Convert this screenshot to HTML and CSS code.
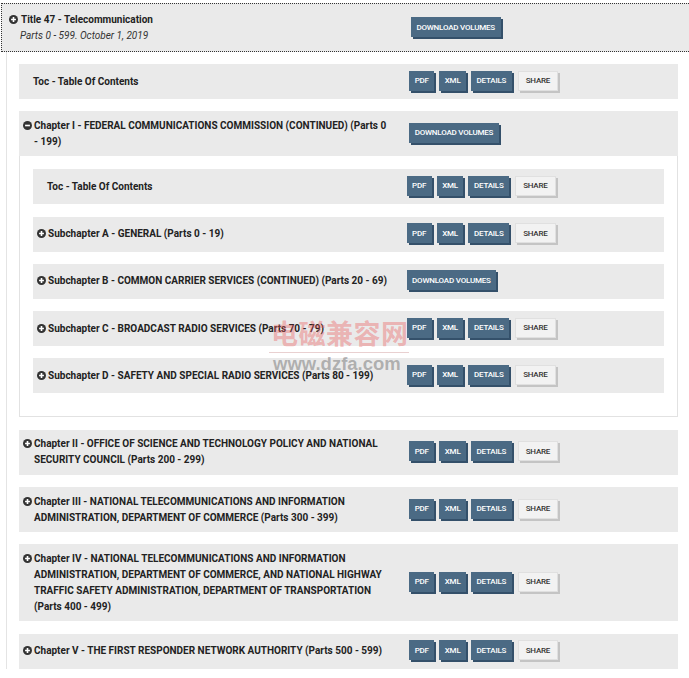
FILE: index.html
```html
<!DOCTYPE html>
<html lang="en">
<head>
<meta charset="utf-8">
<title>Title 47 - Telecommunication</title>
<link rel="stylesheet" href="styles.css">
</head>
<body>
<div class="page">
  <section class="title">
    <div class="title-head">
      <div class="title-text">
        <div class="title-name"><svg class="ico" viewBox="0 0 10 10"><circle cx="5" cy="5" r="5"/><path d="M5 2.3v5.4M2.3 5h5.4"/></svg>Title 47 - Telecommunication</div>
        <div class="title-sub">Parts 0 - 599. October 1, 2019</div>
      </div>
      <div class="actions"><a class="btn">Download Volumes</a></div>
    </div>

    <div class="title-body">
      <div class="row">
        <div class="label plain">Toc - Table Of Contents</div>
        <div class="actions"><a class="btn">PDF</a><a class="btn">XML</a><a class="btn">Details</a><a class="btn light">Share</a></div>
      </div>

      <div class="chapter">
        <div class="row">
          <div class="label"><svg class="ico" viewBox="0 0 10 10"><circle cx="5" cy="5" r="5"/><path d="M2.3 5h5.4"/></svg>Chapter I - FEDERAL COMMUNICATIONS COMMISSION (CONTINUED) (Parts 0 - 199)</div>
          <div class="actions"><a class="btn">Download Volumes</a></div>
        </div>
        <div class="chapter-body">
          <div class="row">
            <div class="label plain">Toc - Table Of Contents</div>
            <div class="actions"><a class="btn">PDF</a><a class="btn">XML</a><a class="btn">Details</a><a class="btn light">Share</a></div>
          </div>
          <div class="row">
            <div class="label"><svg class="ico" viewBox="0 0 10 10"><circle cx="5" cy="5" r="5"/><path d="M5 2.3v5.4M2.3 5h5.4"/></svg>Subchapter A - GENERAL (Parts 0 - 19)</div>
            <div class="actions"><a class="btn">PDF</a><a class="btn">XML</a><a class="btn">Details</a><a class="btn light">Share</a></div>
          </div>
          <div class="row">
            <div class="label"><svg class="ico" viewBox="0 0 10 10"><circle cx="5" cy="5" r="5"/><path d="M5 2.3v5.4M2.3 5h5.4"/></svg>Subchapter B - COMMON CARRIER SERVICES (CONTINUED) (Parts 20 - 69)</div>
            <div class="actions"><a class="btn">Download Volumes</a></div>
          </div>
          <div class="row">
            <div class="label"><svg class="ico" viewBox="0 0 10 10"><circle cx="5" cy="5" r="5"/><path d="M5 2.3v5.4M2.3 5h5.4"/></svg>Subchapter C - BROADCAST RADIO SERVICES (Parts 70 - 79)</div>
            <div class="actions"><a class="btn">PDF</a><a class="btn">XML</a><a class="btn">Details</a><a class="btn light">Share</a></div>
          </div>
          <div class="row">
            <div class="label"><svg class="ico" viewBox="0 0 10 10"><circle cx="5" cy="5" r="5"/><path d="M5 2.3v5.4M2.3 5h5.4"/></svg>Subchapter D - SAFETY AND SPECIAL RADIO SERVICES (Parts 80 - 199)</div>
            <div class="actions"><a class="btn">PDF</a><a class="btn">XML</a><a class="btn">Details</a><a class="btn light">Share</a></div>
          </div>
        </div>
      </div>

      <div class="row">
        <div class="label"><svg class="ico" viewBox="0 0 10 10"><circle cx="5" cy="5" r="5"/><path d="M5 2.3v5.4M2.3 5h5.4"/></svg>Chapter II - OFFICE OF SCIENCE AND TECHNOLOGY POLICY AND NATIONAL SECURITY COUNCIL (Parts 200 - 299)</div>
        <div class="actions"><a class="btn">PDF</a><a class="btn">XML</a><a class="btn">Details</a><a class="btn light">Share</a></div>
      </div>
      <div class="row">
        <div class="label"><svg class="ico" viewBox="0 0 10 10"><circle cx="5" cy="5" r="5"/><path d="M5 2.3v5.4M2.3 5h5.4"/></svg>Chapter III - NATIONAL TELECOMMUNICATIONS AND INFORMATION ADMINISTRATION, DEPARTMENT OF COMMERCE (Parts 300 - 399)</div>
        <div class="actions"><a class="btn">PDF</a><a class="btn">XML</a><a class="btn">Details</a><a class="btn light">Share</a></div>
      </div>
      <div class="row">
        <div class="label"><svg class="ico" viewBox="0 0 10 10"><circle cx="5" cy="5" r="5"/><path d="M5 2.3v5.4M2.3 5h5.4"/></svg>Chapter IV - NATIONAL TELECOMMUNICATIONS AND INFORMATION ADMINISTRATION, DEPARTMENT OF COMMERCE, AND NATIONAL HIGHWAY TRAFFIC SAFETY ADMINISTRATION, DEPARTMENT OF TRANSPORTATION (Parts 400 - 499)</div>
        <div class="actions"><a class="btn">PDF</a><a class="btn">XML</a><a class="btn">Details</a><a class="btn light">Share</a></div>
      </div>
      <div class="row">
        <div class="label"><svg class="ico" viewBox="0 0 10 10"><circle cx="5" cy="5" r="5"/><path d="M5 2.3v5.4M2.3 5h5.4"/></svg>Chapter V - THE FIRST RESPONDER NETWORK AUTHORITY (Parts 500 - 599)</div>
        <div class="actions"><a class="btn">PDF</a><a class="btn">XML</a><a class="btn">Details</a><a class="btn light">Share</a></div>
      </div>
    </div>
  </section>

  <div class="watermark">
    <div class="wm-cn">电磁兼容网</div>
    <div class="wm-url">www.dzfa.com</div>
  </div>
</div>
</body>
</html>
```

FILE: styles.css
```css
* { box-sizing: border-box; }

body {
  margin: 0;
  background: #fff;
  color: #222;
  font-family: Roboto, "Liberation Sans", sans-serif;
  font-size: 10px;
  overflow: hidden;
}

.page {
  position: relative;
  padding: 3px 0 0 1px;
}

/* ---------- title header ---------- */
.title-head {
  display: flex;
  align-items: center;
  background: #eaeaea;
  border: 1px dotted #333;
  border-right: 0;
  padding: 8px 0 7px 7px;
}

.title-text {
  flex: 0 0 59.1%;
}

.title-name {
  font-weight: 700;
  line-height: 16px;
}

.title-sub {
  font-style: italic;
  color: #333;
  line-height: 16px;
  padding-left: 11px;
}

/* ---------- body ---------- */
.title-body {
  margin-left: 5px;
  border-left: 1px solid #e4e4e4;
  padding: 12px 11px 0 12px;
  display: flex;
  flex-direction: column;
  gap: 12.3px;
}

.row {
  display: flex;
  align-items: center;
  background: #eaeaea;
  padding: 6.5px 0;
  min-height: 35px;
}

.label {
  flex: 0 0 59.2%;
  font-weight: 700;
  line-height: 16px;
  padding: 0 18px 0 15px;
  text-indent: -11px;
}

.chapter-body .label {
  padding-right: 14px;
}

.label.plain {
  padding-left: 14px;
  text-indent: 0;
}

.ico {
  display: inline-block;
  width: 9px;
  height: 9px;
  margin-right: 2px;
  vertical-align: -1px;
}

.ico circle { fill: #333; }
.ico path { stroke: #fff; stroke-width: 1.8; fill: none; }

.title-name .ico { margin-right: 3px; }

/* chapter panel */
.chapter-body {
  border: 1px solid #e2e2e2;
  border-top: 0;
  padding: 13px 13px 23px 13px;
  display: flex;
  flex-direction: column;
  gap: 12.3px;
}

/* ---------- buttons ---------- */
.actions {
  display: flex;
  align-items: flex-start;
  gap: 5px;
  height: 22px;
}

.btn {
  display: inline-flex;
  align-items: center;
  height: 20px;
  padding: 0 5.5px;
  background: #4b6a84;
  color: #fff;
  font-size: 8px;
  font-weight: 500;
  letter-spacing: -0.2px;
  text-transform: uppercase;
  box-shadow: 2px 2px 0 #34506a;
  white-space: nowrap;
}

.btn.light {
  background: #f2f2f2;
  color: #333;
  border: 1px solid #e0e0e0;
  padding: 0 7px;
  margin-left: 1px;
  box-shadow: 2px 2px 0 #c4c4c4;
}

/* ---------- watermark ---------- */
.watermark {
  position: absolute;
  left: 269px;
  top: 314px;
  pointer-events: none;
}

.wm-cn {
  font-family: "Noto Sans CJK SC", sans-serif;
  font-weight: 700;
  font-size: 27px;
  line-height: 38px;
  letter-spacing: 0.5px;
  color: rgba(235, 90, 90, 0.4);
  border-bottom: 1px solid rgba(215, 170, 170, 0.55);
  padding-left: 2px;
}

.wm-url {
  font-family: "Liberation Sans", sans-serif;
  font-weight: 700;
  font-size: 18.5px;
  line-height: 22px;
  color: rgba(100, 100, 100, 0.45);
  padding-left: 4px;
}
```
